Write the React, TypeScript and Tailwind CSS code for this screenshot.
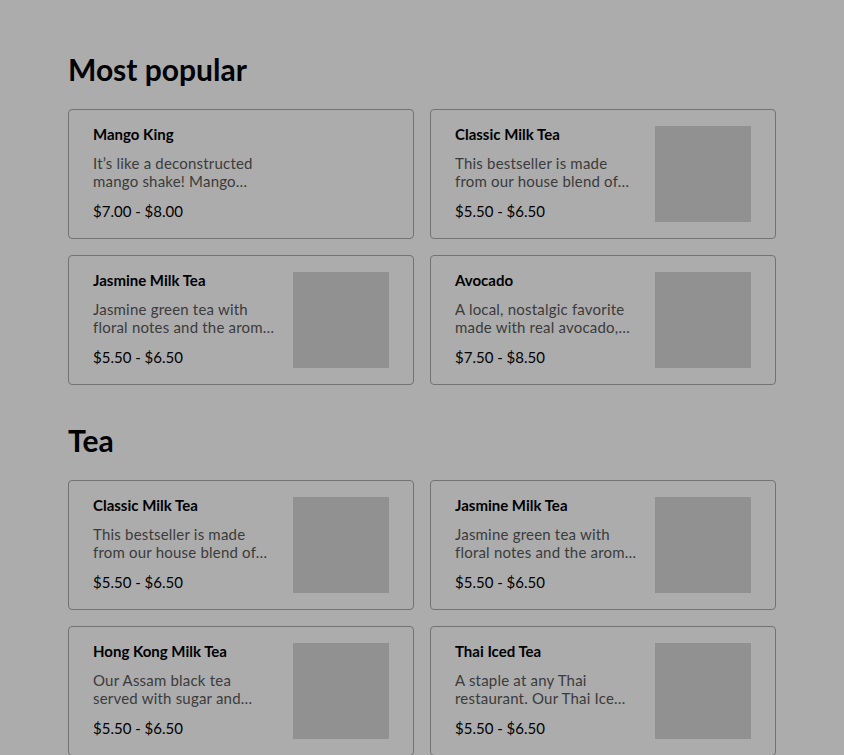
import React from "react";

type Item = { name: string; desc: string; price: string; img: boolean };

const popular: Item[] = [
  { name: "Mango King", desc: "It’s like a deconstructed mango shake! Mango slushie with fresh mango pieces", price: "$7.00 - $8.00", img: false },
  { name: "Classic Milk Tea", desc: "This bestseller is made from our house blend of black teas", price: "$5.50 - $6.50", img: true },
  { name: "Jasmine Milk Tea", desc: "Jasmine green tea with floral notes and the aroma of jasmine flowers", price: "$5.50 - $6.50", img: true },
  { name: "Avocado", desc: "A local, nostalgic favorite made with real avocado, blended smooth", price: "$7.50 - $8.50", img: true },
];

const tea: Item[] = [
  { name: "Classic Milk Tea", desc: "This bestseller is made from our house blend of black teas", price: "$5.50 - $6.50", img: true },
  { name: "Jasmine Milk Tea", desc: "Jasmine green tea with floral notes and the aroma of jasmine flowers", price: "$5.50 - $6.50", img: true },
  { name: "Hong Kong Milk Tea", desc: "Our Assam black tea served with sugar and evaporated milk", price: "$5.50 - $6.50", img: true },
  { name: "Thai Iced Tea", desc: "A staple at any Thai restaurant. Our Thai Ice Tea is brewed strong", price: "$5.50 - $6.50", img: true },
];

function Card({ item }: { item: Item }) {
  return (
    <div className="flex h-[130px] justify-between gap-4 rounded-[4px] border border-[#737373] px-6 py-4">
      <div className="-mt-px flex w-[184px] shrink-0 flex-col">
        <div className="text-[15px] font-bold leading-[18px] text-black">{item.name}</div>
        <div className="mt-[11px] line-clamp-2 text-[15px] leading-[18px] tracking-[0.2px] text-[#3b3b3b]">{item.desc}</div>
        <div className="mt-[12px] text-[15px] leading-[18px] text-black">{item.price}</div>
      </div>
      {item.img && <div className="h-24 w-24 shrink-0 bg-[#919191]" />}
    </div>
  );
}

function Section({ title, items }: { title: string; items: Item[] }) {
  return (
    <section>
      <h2 className="text-[30px] font-bold leading-[36px] text-black">{title}</h2>
      <div className="mt-[22px] grid grid-cols-2 gap-4">
        {items.map((it, i) => (
          <Card key={i} item={it} />
        ))}
      </div>
    </section>
  );
}

export default function App() {
  return (
    <div className="min-h-[755px] w-full bg-[#acacac]" style={{ fontFamily: "Lato, 'Noto Sans', sans-serif" }}>
      <div className="mx-auto flex w-[708px] flex-col gap-[37px] pt-[51px]">
        <Section title="Most popular" items={popular} />
        <Section title="Tea" items={tea} />
      </div>
    </div>
  );
}
